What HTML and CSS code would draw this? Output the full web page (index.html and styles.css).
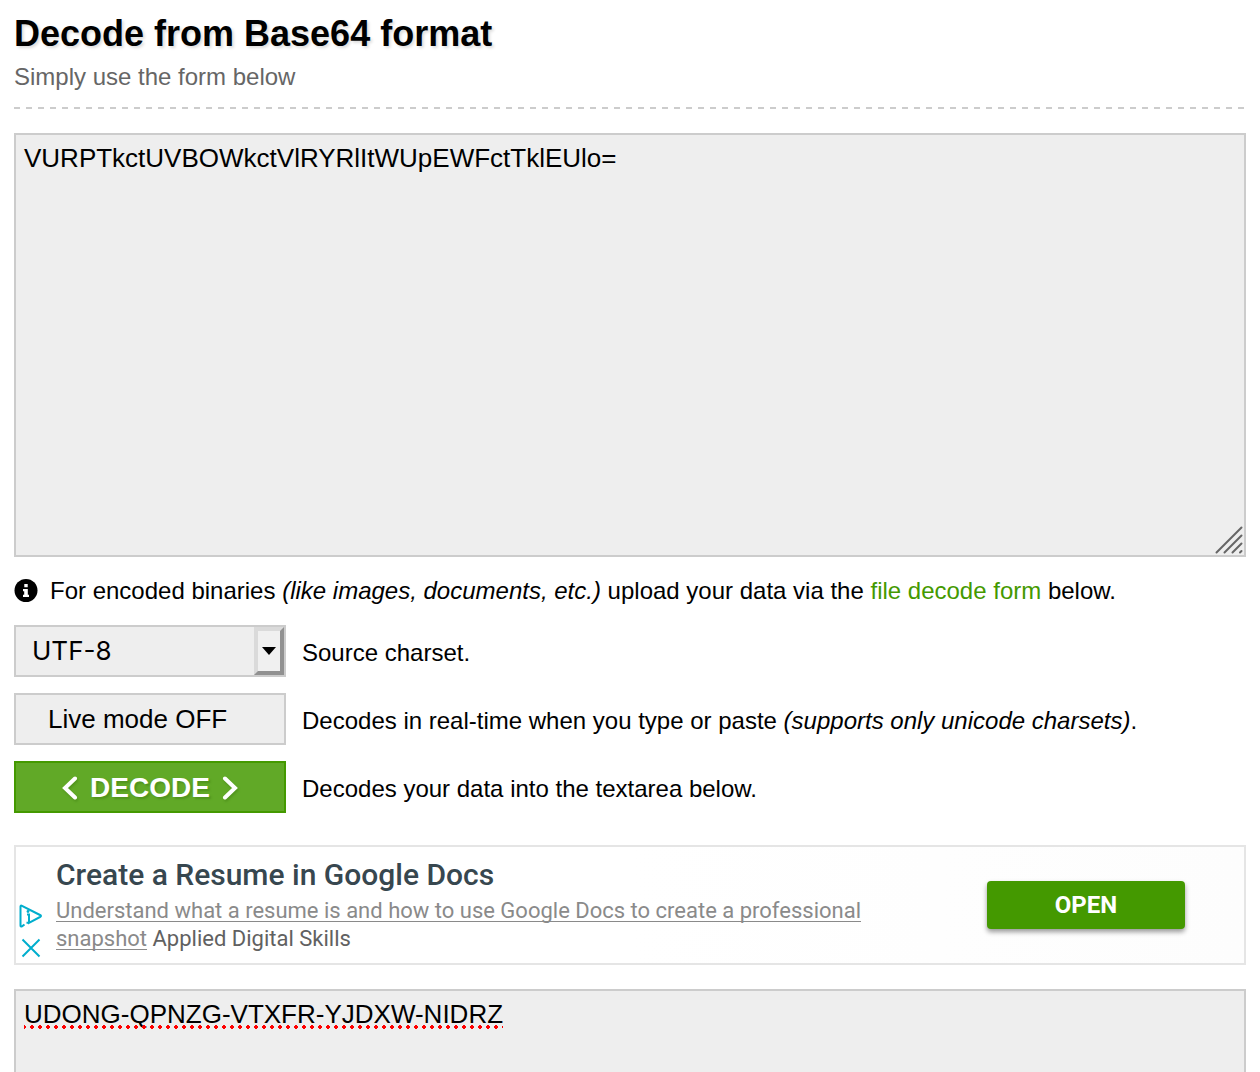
FILE: index.html
```html
<!DOCTYPE html>
<html lang="en">
<head>
<meta charset="utf-8">
<meta name="viewport" content="width=device-width, initial-scale=1">
<title>Decode from Base64 format</title>
<link rel="stylesheet" href="styles.css">
</head>
<body>
<main class="page">
  <header class="header">
    <h1 class="title">Decode from Base64 format</h1>
    <p class="subtitle">Simply use the form below</p>
  </header>

  <form class="form">
    <div class="field">
      <textarea class="textarea" aria-label="Data to decode" spellcheck="false">VURPTkctUVBOWkctVlRYRlItWUpEWFctTklEUlo=</textarea>
      <svg class="grip" viewBox="0 0 28 28" aria-hidden="true"><path d="M1.500 26.500 26.500 1.500M9.500 26.500 26.500 9.500M17.500 26.500 26.500 17.500M25 26.500 26.500 25"/></svg>
    </div>

    <p class="note">
      <svg class="info" viewBox="0 0 24 24" aria-hidden="true"><circle cx="12" cy="11.500" r="11.500"/><path fill="#fff" d="M10.300 5h3.400v3.200h-3.400zM9 10h4.800v5.800H15V18H9v-2.200h1.200v-3.600H9z"/></svg>
      <span>For encoded binaries <em>(like images, documents, etc.)</em> upload your data via the <a class="link" href="#file">file decode form</a> below.</span>
    </p>

    <div class="row">
      <div class="select-box">
        <select class="control select" id="charset"><option>UTF-8</option></select>
        <span class="arrow" aria-hidden="true"></span>
      </div>
      <label class="help" for="charset">Source charset.</label>
    </div>
    <div class="row">
      <button class="control live" type="button" aria-describedby="live-help">Live mode OFF</button>
      <span class="help" id="live-help">Decodes in real-time when you type or paste <em>(supports only unicode charsets)</em>.</span>
    </div>
    <div class="row">
      <button class="control decode" type="button" aria-describedby="decode-help">
        <svg class="chevron" viewBox="0 0 16 24" aria-hidden="true"><path d="M13 2.500 3 12l10 9.500"/></svg>
        DECODE
        <svg class="chevron" viewBox="0 0 16 24" aria-hidden="true"><path d="m3 2.500 10 9.500-10 9.500"/></svg>
      </button>
      <span class="help" id="decode-help">Decodes your data into the textarea below.</span>
    </div>

    <aside class="ad">
      <div class="ad-marks">
        <a href="#adchoices" aria-label="Ad choices"><svg class="mark" viewBox="0 0 24 24"><path d="M5.500 20.500 3 22.300Q1.500 23 1.500 21.500V2.500Q1.500 1 3 1.800L21 11Q23 12 21 13L10 18.800V10.500H8M10 18.800H7.500"/><circle cx="9" cy="7.500" r="1.400" fill="#00aecd" stroke="none"/></svg></a>
        <button class="close" type="button" aria-label="Close ad"><svg class="mark" viewBox="0 0 24 24"><path d="M3.500 3.500l17 17M20.500 3.500l-17 17"/></svg></button>
      </div>
      <div class="ad-copy">
        <h2 class="ad-title">Create a Resume in Google Docs</h2>
        <p class="ad-text"><a class="ad-link" href="#resume">Understand what a resume is and how to use Google Docs to create a professional snapshot</a> Applied Digital Skills</p>
      </div>
      <button class="open" type="button">OPEN</button>
    </aside>

    <div class="field">
      <textarea class="textarea" aria-label="Decoded data" spellcheck="false">UDONG-QPNZG-VTXFR-YJDXW-NIDRZ</textarea>
      <span class="spelling" aria-hidden="true"></span>
    </div>
  </form>
</main>
</body>
</html>
```
FILE: styles.css
```css
* {
  box-sizing: border-box;
}

body {
  margin: 0;
  height: 100vh;
  overflow: hidden;
  background: #fff;
  color: #000;
  font: 24px/32px "Liberation Sans", Arial, sans-serif;
}

h1, h2, p {
  margin: 0;
}

.page {
  padding: 12px 14px;
}

.header {
  padding-bottom: 11px;
  background: repeating-linear-gradient(90deg, #ccc 0 6px, transparent 6px 12px) left bottom / 100% 2px no-repeat;
}

.title {
  font-size: 36px;
  line-height: 44px;
  text-shadow: 2px 2px 3px #ddd;
}

.subtitle {
  line-height: 42px;
  color: #666;
}

.form {
  display: flex;
  flex-direction: column;
  gap: 16px;
  padding-top: 24px;
}

.field {
  position: relative;
}

.textarea {
  display: block;
  width: 100%;
  height: 424px;
  padding: 8px;
  border: 2px solid #ccc;
  border-radius: 0;
  outline: 0;
  background: #eee;
  color: #000;
  font: 26px/30px "Liberation Sans", Arial, sans-serif;
  resize: none;
}

.grip {
  position: absolute;
  right: 3px;
  bottom: 3px;
  width: 28px;
  height: 28px;
  fill: none;
  stroke: #666;
  stroke-width: 2;
  stroke-linecap: round;
}

.spelling {
  position: absolute;
  top: 36px;
  left: 10px;
  width: 479px;
  height: 4px;
  background: radial-gradient(circle, #f00 0 2px, transparent 2px) -4px 0 / 8px 4px;
}

.note {
  display: flex;
  align-items: center;
  gap: 12px;
  padding: 2px 0;
}

.info {
  flex: none;
  width: 24px;
  height: 24px;
}

.link {
  color: #490;
  text-decoration: none;
}

.row {
  display: flex;
  align-items: center;
  gap: 16px;
}

.help {
  padding-top: 4px;
}

.control {
  flex: none;
  width: 272px;
  height: 52px;
  padding: 0 16px;
  border: 2px solid #ccc;
  border-radius: 0;
  background: #eee;
  color: #000;
  font: 26px/30px "Liberation Sans", Arial, sans-serif;
}

.select-box {
  position: relative;
  display: flex;
}

.select {
  appearance: none;
  font-family: Inter, sans-serif;
}

.arrow {
  position: absolute;
  top: 2px;
  right: 2px;
  bottom: 2px;
  display: grid;
  place-items: center;
  width: 30px;
  border: 4px solid;
  border-color: #dadada #919191 #919191 #dadada;
  background: #f0f0f0;
  pointer-events: none;
}

.arrow::before {
  content: "";
  border: 7px solid transparent;
  border-top: 8px solid #000;
  border-bottom: 0;
}

.live {
  padding-left: 32px;
  text-align: left;
}

.decode {
  display: flex;
  align-items: center;
  justify-content: center;
  gap: 12px;
  padding-top: 2px;
  border-color: #490;
  background: #61a927;
  color: #fff;
  font-size: 28px;
  font-weight: 700;
  text-shadow: 2px 2px 2px #51941d;
}

.chevron {
  width: 16px;
  height: 24px;
  fill: none;
  stroke: #fff;
  stroke-width: 4;
  stroke-linecap: round;
  filter: drop-shadow(1px 2px 1px #51941d);
}

.ad {
  display: flex;
  align-items: center;
  margin: 16px 0 8px;
  padding: 0 59px 0 3px;
  height: 120px;
  border: 2px solid #e5e5e5;
  background: linear-gradient(90deg, #fff 50%, #fdfdfd);
  font-family: Roboto, sans-serif;
}

.ad-marks {
  display: grid;
  align-self: flex-end;
  gap: 8px;
  padding-bottom: 3px;
}

.mark {
  display: block;
  width: 24px;
  height: 24px;
  fill: none;
  stroke: #00aecd;
  stroke-width: 2;
}

.close {
  padding: 0;
  border: 0;
  background: none;
}

.ad-copy {
  flex: 1;
  padding: 0 120px 0 13px;
}

.ad-title {
  margin-bottom: 4px;
  color: #37474f;
  font-size: 30px;
  font-weight: 500;
  line-height: 36px;
}

.ad-text {
  color: #616161;
  font-size: 22px;
  line-height: 28px;
}

.ad-link {
  color: #8a8a8a;
  text-decoration: underline;
  text-decoration-thickness: 1px;
  text-underline-offset: 3px;
  text-decoration-skip-ink: none;
}

.open {
  width: 198px;
  height: 48px;
  border: 0;
  border-radius: 4px;
  background: #490;
  box-shadow: 0 3px 5px #0006;
  color: #fff;
  font: 700 24px/28px Roboto, sans-serif;
}
```
